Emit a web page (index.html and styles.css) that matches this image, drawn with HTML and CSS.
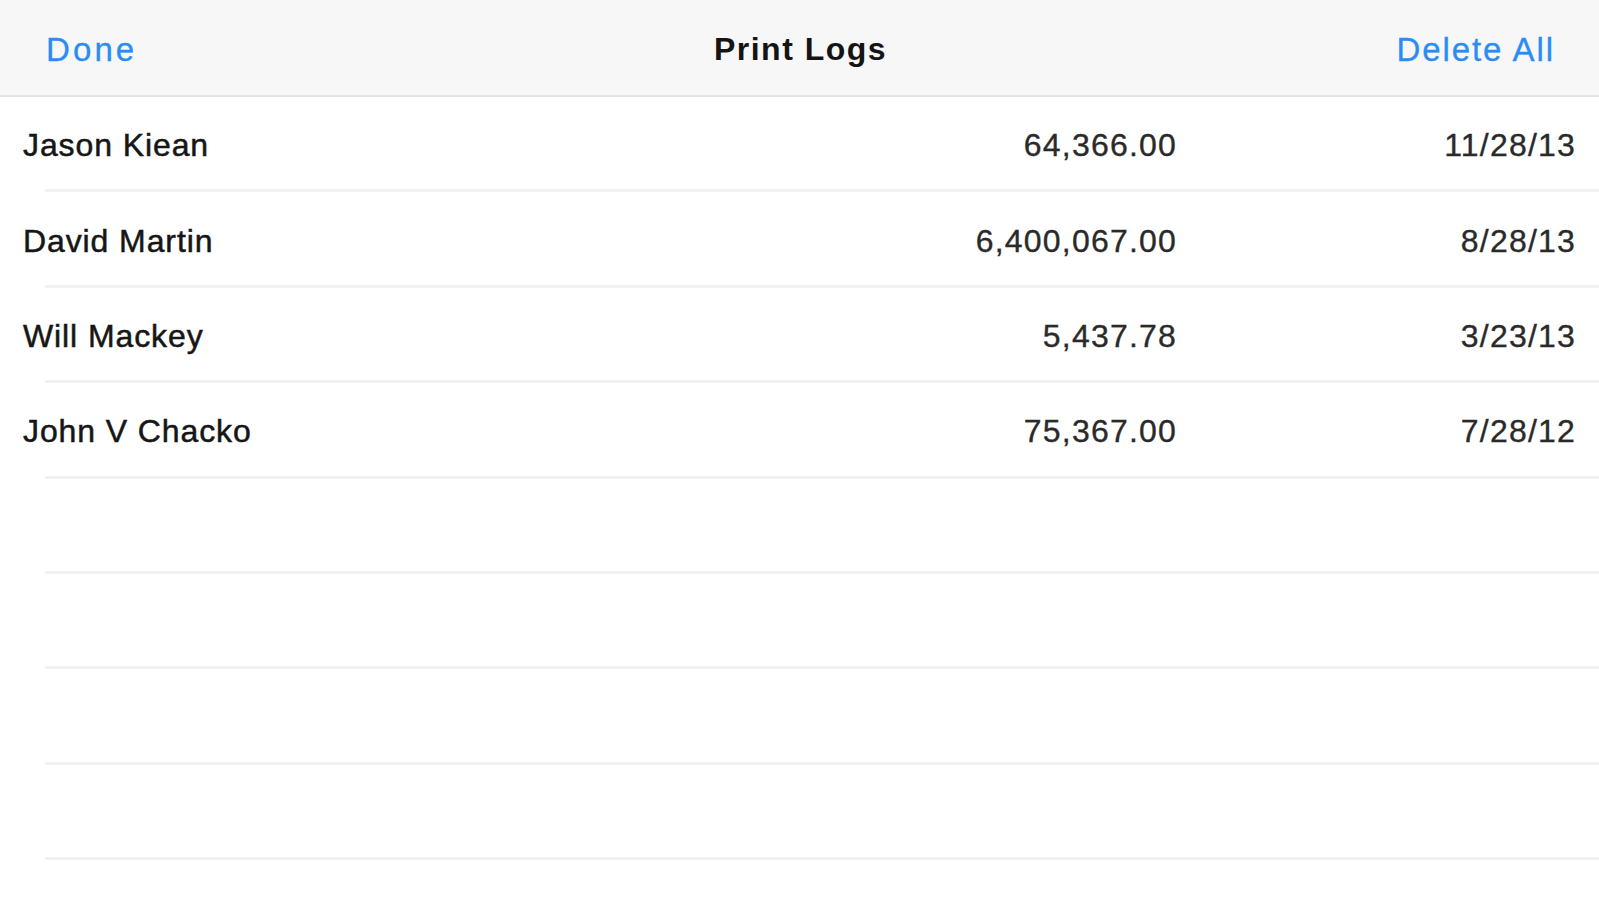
FILE: index.html
```html
<!DOCTYPE html>
<html>
<head>
<meta charset="utf-8">
<link rel="stylesheet" href="styles.css">
</head>
<body>
<div class="screen">
  <header class="navbar">
    <span class="nav-btn left">Done</span>
    <span class="nav-title">Print Logs</span>
    <span class="nav-btn right">Delete All</span>
  </header>
  <ul class="list">
    <li class="row"><span class="name">Jason Kiean</span><span class="amount">64,366.00</span><span class="date">11/28/13</span></li>
    <li class="row"><span class="name">David Martin</span><span class="amount">6,400,067.00</span><span class="date">8/28/13</span></li>
    <li class="row"><span class="name">Will Mackey</span><span class="amount">5,437.78</span><span class="date">3/23/13</span></li>
    <li class="row"><span class="name">John V Chacko</span><span class="amount">75,367.00</span><span class="date">7/28/12</span></li>
    <li class="row empty"></li>
    <li class="row empty"></li>
    <li class="row empty"></li>
    <li class="row empty"></li>
  </ul>
</div>
</body>
</html>
```
FILE: styles.css
```css
html, body {
  margin: 0;
  padding: 0;
  background: #ffffff;
}
.screen {
  width: 1599px;
  height: 900px;
  overflow: hidden;
  font-family: "Liberation Sans", Arial, sans-serif;
}
.navbar {
  height: 97px;
  background: #f7f7f7;
  border-bottom: 2px solid #e4e4e4;
  display: grid;
  grid-template-columns: 1fr auto 1fr;
  align-items: center;
  padding: 4px 44px 0 46px;
  box-sizing: border-box;
}
.nav-btn {
  color: #2a8df5;
  font-size: 33px;
  letter-spacing: 1.9px;
  -webkit-text-stroke: 0.3px #2a8df5;
}
.nav-btn.left {
  justify-self: start;
  letter-spacing: 3.1px;
}
.nav-btn.right { justify-self: end; }
.nav-title {
  color: #141414;
  font-size: 32px;
  font-weight: bold;
  letter-spacing: 1.5px;
}
.list {
  list-style: none;
  margin: 0;
  padding: 0;
}
.row {
  height: 95.4px;
  margin-left: 45px;
  padding-right: 23px;
  box-sizing: border-box;
  border-bottom: 3px solid #f1f1f1;
  display: flex;
  align-items: center;
  font-size: 32px;
  padding-top: 5px;
}
.name {
  flex: 1;
  margin-left: -22px;
  color: #161616;
  letter-spacing: 0.9px;
  -webkit-text-stroke: 0.5px #161616;
}
.amount {
  color: #2a2a2a;
  text-align: right;
  letter-spacing: 1.2px;
  -webkit-text-stroke: 0.35px #2a2a2a;
}
.date {
  width: 399px;
  text-align: right;
  color: #2a2a2a;
  letter-spacing: 1.2px;
  -webkit-text-stroke: 0.35px #2a2a2a;
}
```
